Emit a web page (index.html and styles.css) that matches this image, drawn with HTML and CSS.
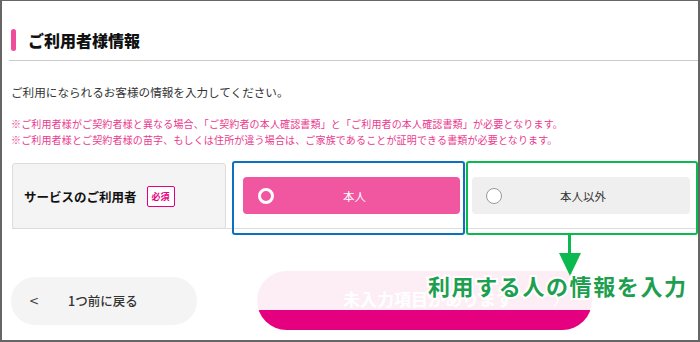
FILE: index.html
```html
<!DOCTYPE html>
<html lang="ja">
<head>
<meta charset="utf-8">
<link rel="stylesheet" href="styles.css">
</head>
<body>
<div class="frame">
  <div class="title">
    <span class="title-bar"></span>
    <h1 class="title-text">ご利用者様情報</h1>
  </div>
  <p class="intro">ご利用になられるお客様の情報を入力してください。</p>
  <div class="notes">
    <p>※ご利用者様がご契約者様と異なる場合、「ご契約者の本人確認書類」と「ご利用者の本人確認書類」が必要となります。</p>
    <p>※ご利用者様とご契約者様の苗字、もしくは住所が違う場合は、ご家族であることが証明できる書類が必要となります。</p>
  </div>
  <div class="row">
    <div class="row-label">
      <span class="label-text">サービスのご利用者</span>
      <span class="badge">必須</span>
    </div>
    <div class="row-options">
      <div class="option option-on"><span class="radio radio-on"></span><span class="option-text">本人</span></div>
      <div class="option option-off"><span class="radio radio-off"></span><span class="option-text">本人以外</span></div>
    </div>
  </div>
  <div class="footer">
    <div class="back"><span class="back-arrow">&lt;</span><span class="back-text">1つ前に戻る</span></div>
    <div class="next"><span class="next-text">未入力項目があります</span><span class="next-arrow">〉</span></div>
  </div>

  <div class="anno-box anno-blue"></div>
  <div class="anno-box anno-green"></div>
  <div class="anno-arrow">
    <span class="anno-stem"></span>
    <span class="anno-head"></span>
  </div>
  <div class="anno-text">利用する人の情報を入力</div>
</div>
</body>
</html>
```
FILE: styles.css
```css
* { box-sizing: border-box; }
html, body { margin: 0; padding: 0; background: #fff; }
.frame {
  position: relative;
  width: 700px;
  height: 342px;
  border-style: solid;
  border-color: #666;
  border-width: 1px 2px 2px 2px;
  overflow: hidden;
  font-family: "Noto Sans CJK JP", "Noto Sans", sans-serif;
  color: #222;
  padding: 0 0 0 7px;
}
.title {
  display: flex;
  align-items: center;
  margin-top: 28px;
  height: 22px;
  box-sizing: content-box;
  padding-bottom: 9px;
  border-bottom: 1px solid #ccc;
}
.title-bar {
  width: 5px;
  height: 22px;
  border-radius: 3px;
  background: #f04c9c;
  margin-left: 2px;
}
.title-text {
  margin: 0 0 0 12px;
  font-size: 16px;
  font-weight: 900;
  line-height: 22px;
  color: #111;
}
.intro {
  margin: 23px 0 0 2px;
  font-size: 11.6px;
  line-height: 16px;
  color: #333;
}
.notes {
  margin: 16px 0 0 2px;
  color: #ea3a8e;
  font-size: 10px;
  letter-spacing: 0.15px;
  line-height: 16px;
}
.notes p { margin: 0; }
.row {
  display: flex;
  margin: 15px 0 0 3px;
  height: 66px;
  border-bottom: 1px solid #ddd;
}
.row-label {
  width: 214px;
  flex: none;
  background: #f4f4f4;
  border: 1px solid #dcdcdc;
  border-radius: 3px;
  display: flex;
  align-items: center;
  padding-left: 11px;
  margin-bottom: -1px;
}
.label-text {
  font-size: 12.5px;
  font-weight: bold;
  color: #111;
}
.badge {
  margin-left: 10px;
  border: 1px solid #e4007f;
  border-radius: 2px;
  color: #e4007f;
  font-size: 9px;
  font-weight: bold;
  width: 28px;
  height: 21px;
  display: flex;
  align-items: center;
  justify-content: center;
  background: #fff;
}
.row-options {
  flex: 1;
  display: grid;
  grid-template-columns: 217px 218px;
  column-gap: 12px;
  align-items: center;
  padding-left: 17px;
}
.option {
  position: relative;
  height: 37px;
  border-radius: 4px;
  display: flex;
  align-items: center;
  justify-content: center;
  font-size: 11.5px;
}
.option-on { background: #f156a0; color: #fff; }
.option-off { background: #efefef; color: #333; }
.option-text { margin-left: 6px; }
.option-off .option-text { margin-left: 4px; }
.radio {
  position: absolute;
  top: 50%;
  width: 16px;
  height: 16px;
  margin-top: -8px;
  border-radius: 50%;
}
.radio-on { left: 15px; border: 3px solid #fff; }
.radio-off { left: 14px; border: 1.5px solid #999; background: #fff; }
.footer {
  display: flex;
  align-items: center;
  margin-top: 42px;
  margin-left: 2px;
}
.back {
  width: 186px;
  height: 48px;
  border-radius: 24px;
  background: #f4f4f4;
  display: flex;
  align-items: center;
  color: #333;
}
.back-arrow {
  margin-left: 18px;
  font-size: 12px;
  font-family: "DejaVu Sans", sans-serif;
  color: #444;
}
.back-text {
  margin-left: 29px;
  font-size: 12.5px;
  font-weight: 500;
}
.next {
  width: 335px;
  height: 59px;
  margin-left: 60px;
  margin-top: 0;
  border-radius: 30px;
  background: linear-gradient(#fdeef5 0, #fdeef5 39px, #e4007f 39px);
  display: flex;
  align-items: center;
  color: #fff;
  padding-left: 86px;
  padding-bottom: 4px;
}
.next-text { font-size: 17px; font-weight: bold; }
.next-arrow { font-size: 14px; margin-left: 40px; }
.anno-box {
  position: absolute;
  top: 160px;
  height: 74px;
  border: 2px solid;
  border-radius: 3px;
}
.anno-blue { left: 230px; width: 233px; border-color: #0a70bf; }
.anno-green { left: 464px; width: 232px; border-color: #0cb94e; }
.anno-arrow {
  position: absolute;
  left: 556px;
  top: 233px;
  width: 23px;
  display: flex;
  flex-direction: column;
  align-items: center;
}
.anno-stem { width: 3px; height: 20px; background: #0cb94e; }
.anno-head {
  width: 0;
  height: 0;
  border-left: 11.5px solid transparent;
  border-right: 11.5px solid transparent;
  border-top: 23px solid #0cb94e;
  margin-top: -1px;
}
.anno-text {
  position: absolute;
  left: 426px;
  top: 269px;
  font-size: 22px;
  font-weight: bold;
  letter-spacing: 1.6px;
  line-height: 30px;
  color: #1d9f4f;
  -webkit-text-stroke: 4px #fff;
  paint-order: stroke fill;
  white-space: nowrap;
}
```
